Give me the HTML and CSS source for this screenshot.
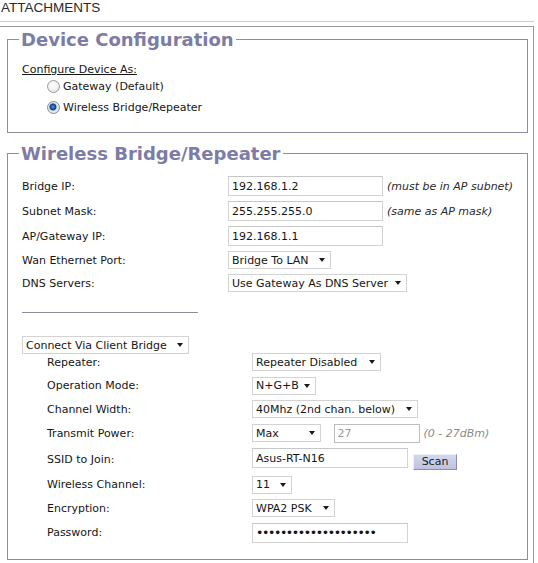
FILE: index.html
```html
<!DOCTYPE html>
<html>
<head>
<meta charset="utf-8">
<link rel="stylesheet" href="styles.css">
</head>
<body>
<div class="page">
  <div class="title">ATTACHMENTS</div>
  <div class="rule"></div>
  <div class="panel">
    <fieldset class="group g1">
      <legend>Device Configuration</legend>
      <div class="subhead">Configure Device As:</div>
      <label class="radio"><input type="radio" name="mode"><span>Gateway (Default)</span></label>
      <label class="radio"><input type="radio" name="mode" checked><span>Wireless Bridge/Repeater</span></label>
    </fieldset>
    <fieldset class="group g2">
      <legend>Wireless Bridge/Repeater</legend>
      <div class="form main">
        <div class="row"><span class="lbl">Bridge IP:</span><span class="ctl"><input class="txt w155" value="192.168.1.2"><em class="hint">(must be in AP subnet)</em></span></div>
        <div class="row"><span class="lbl">Subnet Mask:</span><span class="ctl"><input class="txt w155" value="255.255.255.0"><em class="hint">(same as AP mask)</em></span></div>
        <div class="row"><span class="lbl">AP/Gateway IP:</span><span class="ctl"><input class="txt w155" value="192.168.1.1"></span></div>
        <div class="row"><span class="lbl">Wan Ethernet Port:</span><span class="ctl"><span class="sel w103"><span>Bridge To LAN</span><svg width="6" height="4" viewBox="0 0 6 4"><path d="M0 0H6L3 4Z" fill="#1a1a1a"/></svg></span></span></div>
        <div class="row"><span class="lbl">DNS Servers:</span><span class="ctl"><span class="sel w179"><span>Use Gateway As DNS Server</span><svg width="6" height="4" viewBox="0 0 6 4"><path d="M0 0H6L3 4Z" fill="#1a1a1a"/></svg></span></span></div>
      </div>
      <div class="sep"></div>
      <span class="sel w167 connect"><span>Connect Via Client Bridge</span><svg width="6" height="4" viewBox="0 0 6 4"><path d="M0 0H6L3 4Z" fill="#1a1a1a"/></svg></span>
      <div class="form sub">
        <div class="row"><span class="lbl">Repeater:</span><span class="ctl"><span class="sel w129"><span>Repeater Disabled</span><svg width="6" height="4" viewBox="0 0 6 4"><path d="M0 0H6L3 4Z" fill="#1a1a1a"/></svg></span></span></div>
        <div class="row"><span class="lbl">Operation Mode:</span><span class="ctl"><span class="sel w64"><span>N+G+B</span><svg width="6" height="4" viewBox="0 0 6 4"><path d="M0 0H6L3 4Z" fill="#1a1a1a"/></svg></span></span></div>
        <div class="row"><span class="lbl">Channel Width:</span><span class="ctl"><span class="sel w166"><span>40Mhz (2nd chan. below)</span><svg width="6" height="4" viewBox="0 0 6 4"><path d="M0 0H6L3 4Z" fill="#1a1a1a"/></svg></span></span></div>
        <div class="row"><span class="lbl">Transmit Power:</span><span class="ctl"><span class="sel w69"><span>Max</span><svg width="6" height="4" viewBox="0 0 6 4"><path d="M0 0H6L3 4Z" fill="#1a1a1a"/></svg></span><input class="txt w86 dis" value="27" disabled><em class="hint grey">(0 - 27dBm)</em></span></div>
        <div class="row"><span class="lbl">SSID to Join:</span><span class="ctl top"><input class="txt w156" value="Asus-RT-N16"><button class="scan" type="button">Scan</button></span></div>
        <div class="row"><span class="lbl">Wireless Channel:</span><span class="ctl"><span class="sel w40"><span>11</span><svg width="6" height="4" viewBox="0 0 6 4"><path d="M0 0H6L3 4Z" fill="#1a1a1a"/></svg></span></span></div>
        <div class="row"><span class="lbl">Encryption:</span><span class="ctl"><span class="sel w83"><span>WPA2 PSK</span><svg width="6" height="4" viewBox="0 0 6 4"><path d="M0 0H6L3 4Z" fill="#1a1a1a"/></svg></span></span></div>
        <div class="row"><span class="lbl">Password:</span><span class="ctl"><input class="txt w156 pw" type="password" value="abcdefghijklmnopqrst"></span></div>
      </div>
    </fieldset>
  </div>
</div>
</body>
</html>
```

FILE: styles.css
```css
html, body {
  margin: 0;
  padding: 0;
  background: #ffffff;
  overflow: hidden;
}

.page {
  width: 538px;
  height: 563px;
  overflow: hidden;
  font-family: "DejaVu Sans", Verdana, sans-serif;
  font-size: 11px;
  color: #161616;
}

.title {
  font-family: "Liberation Sans", Arial, sans-serif;
  font-size: 13.5px;
  line-height: 16px;
  height: 16px;
  color: #2a2a2a;
  padding-left: 1px;
}

.rule {
  height: 1px;
  background: #c8ccd3;
  margin-top: 5px;
  width: 534px;
}

.panel {
  box-sizing: border-box;
  width: 535px;
  margin-left: -1px;
  margin-top: 4px;
  border: 1px solid #9a9a9a;
  padding: 2px 5px 20px 7px;
}

.group {
  margin: 0;
  border: 1px solid #8d8da0;
  padding: 12px 14px 15px 14px;
  min-width: 0;
}

.g1 {
  padding-bottom: 14px;
}

.group legend {
  font-family: "DejaVu Sans", Verdana, sans-serif;
  font-weight: bold;
  font-size: 18px;
  line-height: 21px;
  color: #7c7ca6;
  padding: 0 2px;
  margin-left: -3px;
}

.g2 {
  margin-top: 10px;
  padding-bottom: 16px;
}

.subhead {
  line-height: 13px;
  height: 13px;
  text-decoration: underline;
  margin-top: 1px;
}

.radio {
  display: flex;
  align-items: center;
  height: 21px;
  padding-left: 25px;
}

.radio input {
  appearance: none;
  -webkit-appearance: none;
  width: 13px;
  height: 13px;
  margin: 0 3px 0 0;
  border-radius: 50%;
  border: 1px solid #9c9c9c;
  box-sizing: border-box;
  background: radial-gradient(circle at 45% 40%, #ffffff 0, #f3f3f3 45%, #d2d2d2 100%);
}

.radio input:checked {
  border-color: #8a8a8a;
  background: radial-gradient(circle at 45% 45%, #5a9ae0 0, #1d5db0 22%, #163f80 36%, #a9c4e2 44%, #ececec 52%, #d2d2d2 100%);
}

.form {
  display: flex;
  flex-direction: column;
}

.main {
  gap: 5px;
}

.sub {
  gap: 5.5px;
  margin-top: -1px;
}

.row {
  display: flex;
  align-items: center;
}

.main .lbl {
  width: 206px;
  flex: none;
}

.sub .lbl {
  width: 205px;
  padding-left: 25px;
  flex: none;
}

.ctl {
  display: flex;
  align-items: center;
}

.ctl.top {
  align-items: flex-start;
}

.txt {
  box-sizing: border-box;
  height: 20px;
  border: 1px solid #d3d3d3;
  border-top-color: #c6c6c6;
  padding: 0 3px;
  margin: 0;
  font-family: "DejaVu Sans", Verdana, sans-serif;
  font-size: 11px;
  color: #161616;
  background: #fff;
  outline: none;
}

.txt.pw {
  font-size: 12.5px;
  letter-spacing: -1.4px;
}

.txt.dis {
  height: 19px;
  margin-left: 12.5px;
  color: #9a9a9a;
  border-color: #bdbdbd;
  background: #fff;
}

.w155 { width: 155px; }
.w156 { width: 156px; }
.w86 { width: 86px; }

.sel {
  box-sizing: border-box;
  height: 18px;
  display: flex;
  align-items: center;
  justify-content: space-between;
  border: 1px solid #d3d3d3;
  padding: 0 5px 0 3px;
  background: #fff;
  white-space: nowrap;
}

.sel svg {
  flex: none;
  display: block;
}

.connect {
  display: flex;
  margin-top: 23px;
}

.w103 { width: 103px; }
.w179 { width: 179px; }
.w167 { width: 167px; }
.w129 { width: 129px; }
.w64 { width: 64px; }
.w166 { width: 166px; }
.w69 { width: 69px; }
.w40 { width: 40px; }
.w83 { width: 83px; }

.hint {
  margin-left: 4px;
  font-style: italic;
  color: #2a2a2a;
}

.hint.grey {
  color: #8a8a8a;
}

.sep {
  width: 176px;
  height: 1px;
  background: #8d8da0;
  margin-top: 20px;
}

.scan {
  box-sizing: border-box;
  width: 44px;
  height: 16px;
  margin: 6px 0 0 5px;
  padding: 0;
  font-family: "DejaVu Sans", Verdana, sans-serif;
  font-size: 11px;
  line-height: 14px;
  color: #1a1a1a;
  background: linear-gradient(#d3d8ef, #bcc3e0);
  border: 1px solid;
  border-color: #eef0f8 #8a90a6 #8a90a6 #eef0f8;
}
```
